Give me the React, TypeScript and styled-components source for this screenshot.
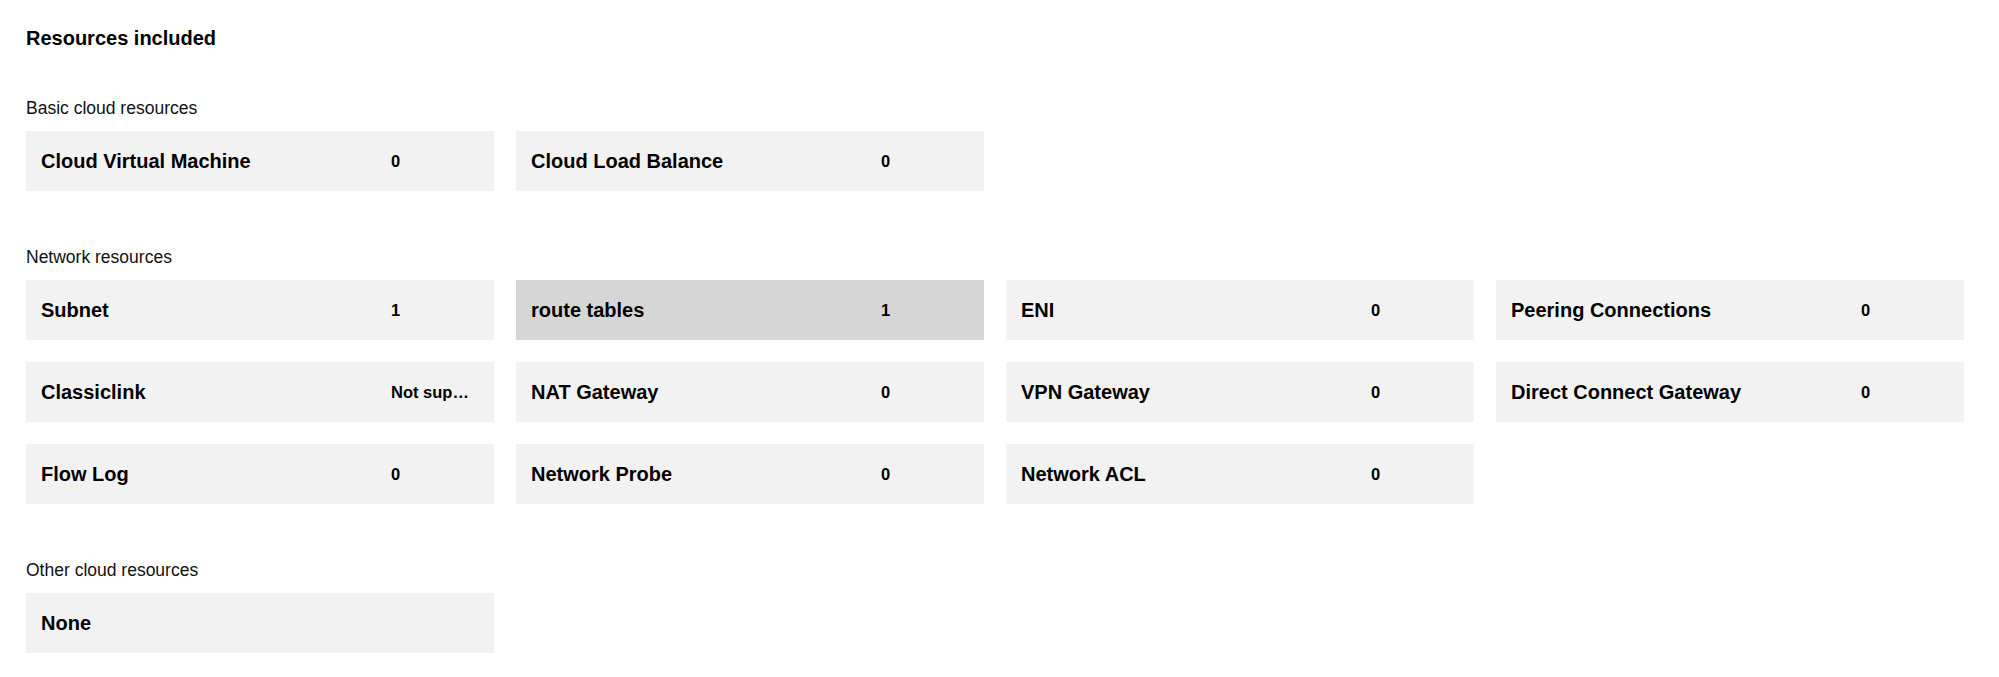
import React from "react";
import styled, { createGlobalStyle } from "styled-components";

type Resource = {
    name: string;
    count?: string;
    active?: boolean;
};

const basic: Resource[] = [
    { name: "Cloud Virtual Machine", count: "0" },
    { name: "Cloud Load Balance", count: "0" },
];

const network: Resource[] = [
    { name: "Subnet", count: "1" },
    { name: "route tables", count: "1", active: true },
    { name: "ENI", count: "0" },
    { name: "Peering Connections", count: "0" },
    { name: "Classiclink", count: "Not supported" },
    { name: "NAT Gateway", count: "0" },
    { name: "VPN Gateway", count: "0" },
    { name: "Direct Connect Gateway", count: "0" },
    { name: "Flow Log", count: "0" },
    { name: "Network Probe", count: "0" },
    { name: "Network ACL", count: "0" },
];

const other: Resource[] = [{ name: "None" }];

const Section = ({ title, items }: { title: string; items: Resource[] }) => {
    return (
        <Group>
            <GroupTitle>{title}</GroupTitle>
            <Grid>
                {items.map((item) => (
                    <Card key={item.name} $active={item.active}>
                        <CardName>{item.name}</CardName>
                        {item.count !== undefined && <CardCount>{item.count}</CardCount>}
                    </Card>
                ))}
            </Grid>
        </Group>
    );
};

const App = () => {
    return (
        <>
            <Global />
            <Page>
                <Heading>Resources included</Heading>
                <Sections>
                    <Section title="Basic cloud resources" items={basic} />
                    <Section title="Network resources" items={network} />
                    <Section title="Other cloud resources" items={other} />
                </Sections>
            </Page>
        </>
    );
};

export default App;

const Global = createGlobalStyle`
body {
    margin: 0;
    background: #ffffff;
    font-family: "Liberation Sans", Arial, Helvetica, sans-serif;
    color: #000000;
}
`;

const Page = styled.div`
padding: 24px 35px 40px 26px;
`;

const Heading = styled.div`
font-size: 20px;
line-height: 28px;
font-weight: 700;
color: #000;
`;

const Sections = styled.div`
margin-top: 46px;
display: flex;
flex-direction: column;
gap: 56px;
`;

const Group = styled.div`
display: flex;
flex-direction: column;
gap: 13px;
`;

const GroupTitle = styled.div`
font-size: 17.5px;
line-height: 20px;
color: #111;
`;

const Grid = styled.div`
display: grid;
grid-template-columns: repeat(4, 468px);
gap: 22px;
`;

const Card = styled.div<{ $active?: boolean }>`
height: 60px;
box-sizing: border-box;
padding: 0 20px 0 15px;
display: flex;
align-items: center;
background-color: ${(p) => (p.$active ? "#d6d6d6" : "#f2f2f2")};
`;

const CardName = styled.div`
width: 350px;
flex-shrink: 0;
font-size: 20px;
font-weight: 700;
color: #000;
white-space: nowrap;
overflow: hidden;
`;

const CardCount = styled.div`
width: 83px;
font-size: 16.5px;
font-weight: 700;
color: #000;
white-space: nowrap;
overflow: hidden;
text-overflow: ellipsis;
`;
